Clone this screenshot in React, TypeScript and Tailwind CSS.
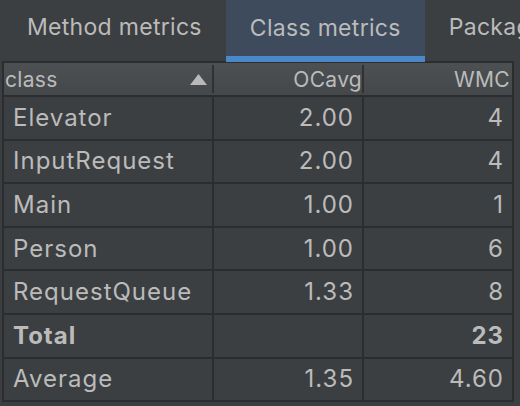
import React from "react";

const rows = [
  { name: "Elevator", oc: "2.00", wmc: "4" },
  { name: "InputRequest", oc: "2.00", wmc: "4" },
  { name: "Main", oc: "1.00", wmc: "1" },
  { name: "Person", oc: "1.00", wmc: "6" },
  { name: "RequestQueue", oc: "1.33", wmc: "8" },
  { name: "Total", oc: "", wmc: "23", bold: true },
  { name: "Average", oc: "1.35", wmc: "4.60" },
];

export default function App() {
  return (
    <div
      className="w-[520px] h-[406px] overflow-hidden bg-[#3c3f41] text-[#bbbbbb]"
      style={{ fontFamily: "Inter, 'Noto Sans', sans-serif" }}
    >
      {/* tabs */}
      <div className="flex h-[62px] pl-[3px] text-[23px] leading-none tracking-[0.3px] whitespace-nowrap">
        <div className="flex items-center px-6 pb-[7px]">Method metrics</div>
        <div className="flex items-center px-6 bg-[#3e4b5c] border-b-[6px] border-[#4a88c7]">
          Class metrics
        </div>
        <div className="flex items-center px-6 pb-[7px]">Package metrics</div>
      </div>

      {/* table */}
      <div className="-mt-px ml-[2px] w-[512px] border-x-2 border-t-2 border-[#2b2d2f]">
        {/* header */}
        <div className="flex h-[34px] border-b-2 border-[#2b2d2f] bg-gradient-to-b from-[#4d5052] to-[#45484a] text-[21px] leading-none tracking-[0.3px]">
          <div className="flex w-[208px] items-center justify-between pl-[1px] pr-[5px]">
            <span>class</span>
            <svg width="17" height="11" viewBox="0 0 17 11">
              <polygon points="8.5,0 17,11 0,11" fill="#b9b9b9" />
            </svg>
          </div>
          <div className="my-[2px] w-[2px] bg-[#2f3133]" />
          <div className="flex w-[148px] items-center justify-end pr-0">OCavg</div>
          <div className="my-[2px] w-[2px] bg-[#2f3133]" />
          <div className="flex w-[148px] items-center justify-end pr-[2px]">WMC</div>
        </div>
        {/* body */}
        {rows.map((r) => (
          <div
            key={r.name}
            className={`flex h-[43.6px] border-b-2 border-[#2b2d2f] text-[24px] leading-none tracking-[1px] ${
              r.bold ? "font-bold" : ""
            }`}
          >
            <div className="flex w-[208px] items-center pl-[9px]">{r.name}</div>
            <div className="w-[2px] bg-[#2b2d2f]" />
            <div className="flex w-[148px] items-center justify-end pr-[8px]">{r.oc}</div>
            <div className="w-[2px] bg-[#2b2d2f]" />
            <div className="flex w-[148px] items-center justify-end pr-[8px]">{r.wmc}</div>
          </div>
        ))}
      </div>
    </div>
  );
}
